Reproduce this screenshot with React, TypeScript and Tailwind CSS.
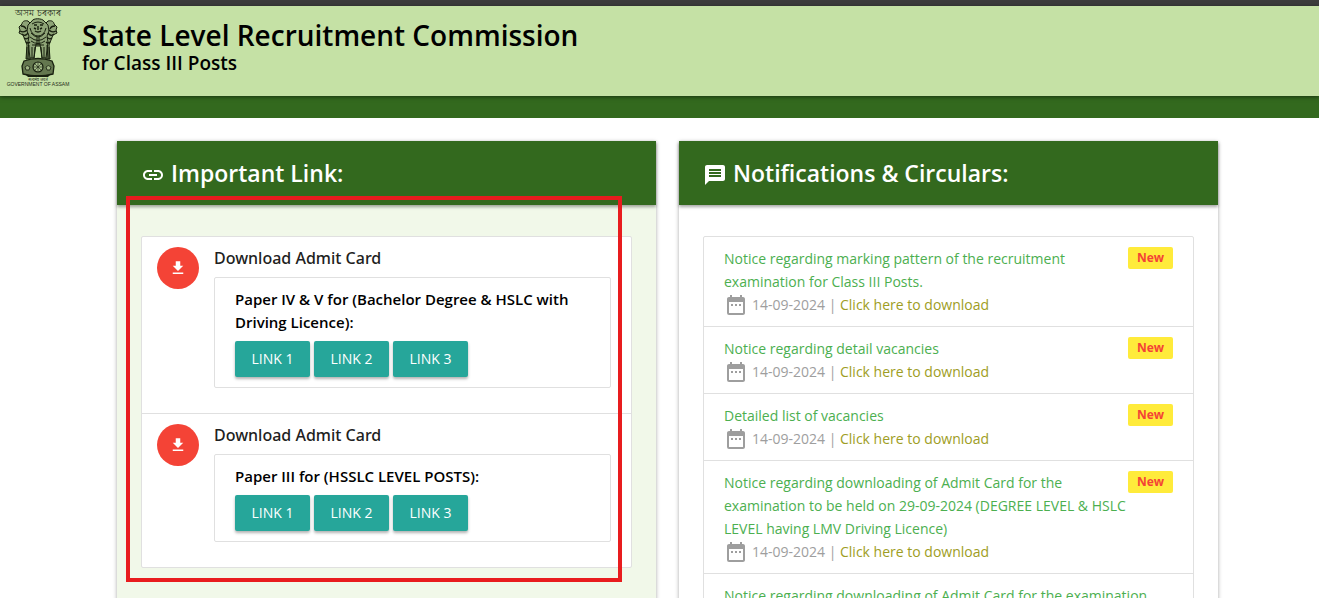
import React from 'react';
import { MdDateRange, MdFileDownload, MdLink, MdMessage } from 'react-icons/md';

const admitCards = [
    { id: 1, paper: 'Paper IV & V for (Bachelor Degree & HSLC with Driving Licence):' },
    { id: 2, paper: 'Paper III for (HSSLC LEVEL POSTS):' },
];

const notices = [
    { id: 1, title: 'Notice regarding marking pattern of the recruitment examination for Class III Posts.', isNew: true },
    { id: 2, title: 'Notice regarding detail vacancies', isNew: true },
    { id: 3, title: 'Detailed list of vacancies', isNew: true },
    { id: 4, title: 'Notice regarding downloading of Admit Card for the examination to be held on 29-09-2024 (DEGREE LEVEL & HSLC LEVEL having LMV Driving Licence)', isNew: true },
    { id: 5, title: 'Notice regarding downloading of Admit Card for the examination', isNew: false },
];

const Emblem: React.FC = () => {
    return (
        <svg viewBox="0 0 64 84" className="h-[84px] w-16 shrink-0" role="img" aria-label="Government of Assam">
            <text x="32" y="10" textAnchor="middle" fontSize="9" fill="#1f2a18">অসম চৰকাৰ</text>
            <g transform="translate(0 1)">
                <g fill="#8ea477" stroke="#18200f" strokeWidth="1">
                    {/* side lions */}
                    <path d="M22 14c-4-1-6 1-6 3l-3 3 1 3-1 3 4 2 2 5 2 5-1 14h4l2-16 2-16z" />
                    <path d="M42 14c4-1 6 1 6 3l3 3-1 3 1 3-4 2-2 5-2 5 1 14h-4l-2-16-2-16z" />
                    {/* front lion */}
                    <path d="M26 14c1-3 10-3 12 0l4 4 1 6-2 5 1 6-2 16h-4l-2-14h-4l-2 14h-4l-2-16 1-6-2-5 1-6z" />
                </g>
                <g fill="none" stroke="#18200f" strokeWidth="1">
                    <path d="M26 17q6-4 12 0M24 21q2 8 8 8t8-8M25 26q7 8 14 0M24 30q8 7 16 0M25 34q7 5 14 0M26 38h12" />
                    <path d="M28 18h3M34 18h3M32 19v4M29 24q3 2 6 0M28 21l2 1M36 21l-2 1" strokeWidth="1.4" />
                    <path d="M15 19q4 0 5 3M14 24q4 2 7-1M16 27q3 3 6-1M18 31q3 2 5-1M20 35q2 2 4 0M49 19q-4 0-5 3M50 24q-4 2-7-1M48 27q-3 3-6-1M46 31q-3 2-5-1M44 35q-2 2-4 0" strokeWidth="1.3" />
                    <path d="M21 40v12M23 38l-1 14M26 40v11M29 40l-1 11M35 40l1 11M38 40v11M41 38l1 14M43 40v12M31 30v10M33 30v10" />
                </g>
                {/* abacus with the wheel */}
                <path d="M18 54q14-5 28 0l2 5-1 8q-15 4-30 0l-1-8z" fill="#64774f" stroke="#18200f" strokeWidth="1.3" />
                <circle cx="32" cy="60" r="5" fill="#a6bd8b" stroke="#18200f" strokeWidth="1.2" />
                <path d="M32 55v10M27 60h10M28.5 56.500l7 7M35.500 56.500l-7 7" stroke="#18200f" strokeWidth=".6" />
                <path d="M19 60q2-3 5 0l-1 3h-3zM40 60q2-3 5 0l-1 3h-3z" fill="#9db283" stroke="#18200f" strokeWidth=".8" />
                <path d="M20 68h24l-2 2H22z" fill="#18200f" />
            </g>
            <text x="32" y="75" textAnchor="middle" fontSize="4" fill="#1f2a18">सत्यमेव जयते</text>
            <text x="32" y="80" textAnchor="middle" fontSize="5" fill="#1f2a18" className="font-['Liberation_Sans',sans-serif]">GOVERNMENT OF ASSAM</text>
        </svg>
    );
}

const CardHeader: React.FC<{ icon: React.ReactNode; title: string }> = ({ icon, title }) => {
    return (
        <h2 className="relative flex h-16 items-center gap-1.5 bg-[#33691e] px-6 text-[23px] font-semibold text-white shadow-[0_2px_3px_rgba(0,0,0,0.35)]">
            {icon}
            {title}
        </h2>
    );
}

const ImportantLinks: React.FC = () => {
    return (
        <section className="relative bg-[#f1f8e9] shadow-[0_1px_4px_rgba(0,0,0,0.35)]">
            <CardHeader icon={<MdLink className="mt-1 size-6" />} title="Important Link:" />
            <div className="px-6 pt-[31px] pb-12">
                <ul className="rounded-xs border border-[#e0e0e0] bg-white">
                    {admitCards.map((card) => (
                        <li key={card.id} className="flex gap-[15px] border-b border-[#e0e0e0] py-2.5 pr-5 pl-[15px] last:border-b-0">
                            <span className="flex size-[42px] shrink-0 items-center justify-center rounded-full bg-[#f44336] text-white">
                                <MdFileDownload className="size-[18px]" />
                            </span>
                            <div className="mb-[15px] grow">
                                <h3 className="font-['Noto_Sans',sans-serif] text-base leading-[23px] font-medium">Download Admit Card</h3>
                                <div className="mt-[7px] rounded-xs border border-[#e0e0e0] px-5 py-2.5">
                                    <p className="text-[15px] leading-[23px] font-semibold text-black">{card.paper}</p>
                                    <div className="mt-[7px] flex gap-1">
                                        <a href="#" className="flex h-9 w-[75px] items-center justify-center rounded-xs bg-[#26a69a] text-sm text-white shadow-[0_2px_3px_rgba(0,0,0,0.3)]">LINK 1</a>
                                        <a href="#" className="flex h-9 w-[75px] items-center justify-center rounded-xs bg-[#26a69a] text-sm text-white shadow-[0_2px_3px_rgba(0,0,0,0.3)]">LINK 2</a>
                                        <a href="#" className="flex h-9 w-[75px] items-center justify-center rounded-xs bg-[#26a69a] text-sm text-white shadow-[0_2px_3px_rgba(0,0,0,0.3)]">LINK 3</a>
                                    </div>
                                </div>
                            </div>
                        </li>
                    ))}
                </ul>
            </div>
            {/* highlight frame over the admit card list */}
            <div className="pointer-events-none absolute top-[55px] right-[34px] left-[9px] h-[386px] border-4 border-[#e81c1e]" />
        </section>
    );
}

const Notifications: React.FC = () => {
    return (
        <section className="bg-white shadow-[0_1px_4px_rgba(0,0,0,0.35)]">
            <CardHeader icon={<MdMessage className="mt-1 size-6" />} title="Notifications & Circulars:" />
            <div className="px-6 pt-[31px] pb-12">
                <ul className="rounded-xs border border-[#e0e0e0]">
                    {notices.map((notice) => (
                        <li key={notice.id} className="border-b border-[#e0e0e0] px-5 py-2.5 text-sm leading-[23px] last:border-b-0">
                            {notice.isNew && (
                                <span className="float-right rounded-xs bg-[#ffeb3b] px-[9px] text-xs leading-[22px] font-bold text-[#f44336]">New</span>
                            )}
                            <p className="pr-2.5 text-[#4caf50]">{notice.title}</p>
                            <div className="flex h-[23px] items-center text-[#9e9e9e]">
                                <MdDateRange className="mr-1 size-6" />
                                <span>14-09-2024 |&nbsp;</span>
                                <a href="#" className="text-[#9e9d24]">Click here to download</a>
                            </div>
                        </li>
                    ))}
                </ul>
            </div>
        </section>
    );
}

const App: React.FC = () => {
    return (
        <div className="h-screen overflow-hidden bg-white font-['Open_Sans','Noto_Sans',sans-serif] text-[#212121]">
            <div className="h-1.5 bg-[#3c3c3c]" />
            <header className="relative flex h-[90px] gap-3 bg-[#c5e1a5] px-1.5 shadow-[0_1px_4px_rgba(0,0,0,0.5)]">
                <Emblem />
                <div className="pt-3 font-semibold text-black">
                    <h1 className="text-[28px] leading-[34px]">State Level Recruitment Commission</h1>
                    <p className="text-[19px] leading-[22px]">for Class III Posts</p>
                </div>
            </header>
            <nav className="h-[22px] bg-[#33691e]" />
            <main className="grid grid-cols-2 items-start gap-[23px] pt-[23px] pr-[101px] pl-[117px]">
                <ImportantLinks />
                <Notifications />
            </main>
        </div>
    );
}

export default App;
